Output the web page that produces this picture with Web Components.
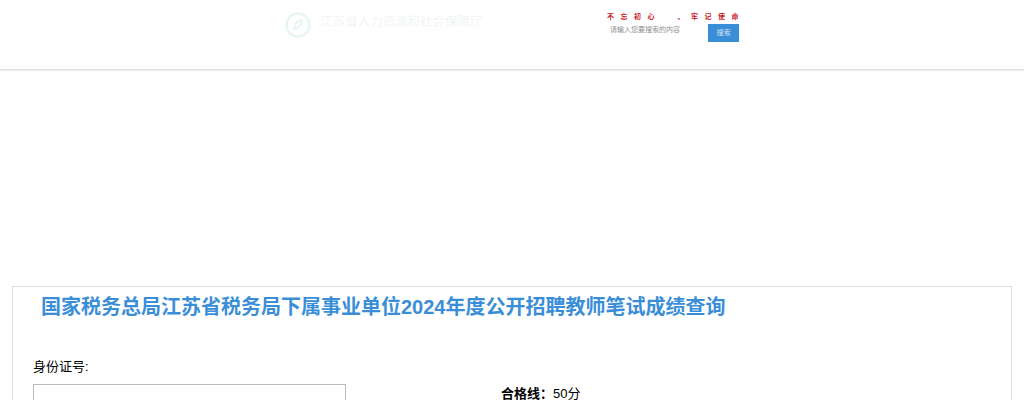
<!DOCTYPE html>
<html lang="zh">
<head>
<meta charset="utf-8">
<title>成绩查询</title>
<style>
  html, body { margin: 0; height: 400px; overflow: hidden; background: #fff; }
  body { font-family: "Liberation Sans", "Noto Sans CJK SC", sans-serif; }
</style>
</head>
<body>
<site-header></site-header>
<query-card heading="国家税务总局江苏省税务局下属事业单位2024年度公开招聘教师笔试成绩查询"></query-card>

<script>
class siteHeader extends HTMLElement {
  constructor() {
    super();
    this.attachShadow({ mode: "open" });
    this.shadowRoot.innerHTML = `
      <style>
        :host {
          display: block;
          height: 69px;
          box-sizing: border-box;
          background: #fff;
          box-shadow: 0 1px 2px rgba(0, 0, 0, .2);
        }
        .inner { display: flex; padding-left: 285px; }
        .logo {
          display: flex;
          align-items: center;
          gap: 9px;
          width: 322px;
          height: 50px;
          color: #f1f5f4;
          font-size: 12.5px;
          white-space: nowrap;
        }
        .logo span { margin-top: -10px; }
        .tools { width: 134px; padding-top: 11px; }
        .slogan {
          height: 12px;
          line-height: 12px;
          font-family: "Liberation Serif", "Noto Sans CJK SC", serif;
          font-size: 7px;
          font-weight: bold;
          letter-spacing: 6.5px;
          color: #c8161d;
          white-space: pre;
        }
        .search { display: flex; margin-top: 1px; padding-left: 3px; }
        .hint {
          width: 98px;
          height: 12px;
          line-height: 12px;
          font-size: 7px;
          color: #8f8f8f;
        }
        .btn {
          width: 31px;
          height: 18px;
          line-height: 18px;
          text-align: center;
          font-size: 7px;
          color: #cfe3f5;
          background: #3a8ed8;
        }
      </style>
      <div class="inner">
        <div class="logo">
          <svg width="26" height="26" viewBox="0 0 26 26" fill="none" stroke="#e8f6f2">
            <circle cx="13" cy="13" r="11.5" stroke-width="2.5"/>
            <path d="M9 17c0-5 3-8 8-9 0 5-3 8-8 9z" stroke-width="2"/>
          </svg>
          <span>江苏省人力资源和社会保障厅</span>
        </div>
        <div class="tools">
          <div class="slogan">不忘初心  、牢记使命</div>
          <div class="search">
            <div class="hint">请输入您要搜索的内容</div>
            <div class="btn">搜索</div>
          </div>
        </div>
      </div>
    `;
  }
}

class queryCard extends HTMLElement {
  constructor() {
    super();
    this.attachShadow({ mode: "open" });
    this.shadowRoot.innerHTML = `
      <style>
        :host {
          display: block;
          box-sizing: border-box;
          width: 1000px;
          height: 300px;
          margin: 217px 0 0 12px;
          border: 1px solid #ddd;
          color: #000;
          font-size: 13px;
        }
        h1 {
          margin: 0;
          padding: 7px 0 0 28px;
          height: 62px;
          box-sizing: border-box;
          font-size: 20px;
          line-height: 26px;
          color: #3a8ed8;
        }
        .form { display: flex; padding-left: 20px; }
        .left { width: 468px; }
        .label { height: 35px; line-height: 36px; }
        .field { width: 313px; height: 34px; box-sizing: border-box; border: 1px solid #bbb; }
        .right { padding-top: 35px; line-height: 19px; white-space: pre; }
      </style>
      <h1>${this.getAttribute("heading")}</h1>
      <div class="form">
        <div class="left">
          <div class="label">身份证号:</div>
          <div class="field"></div>
        </div>
        <div class="right"><b>合格线：</b>50分</div>
      </div>
    `;
  }
}

customElements.define("site-header", siteHeader);
customElements.define("query-card", queryCard);
</script>
</body>
</html>
